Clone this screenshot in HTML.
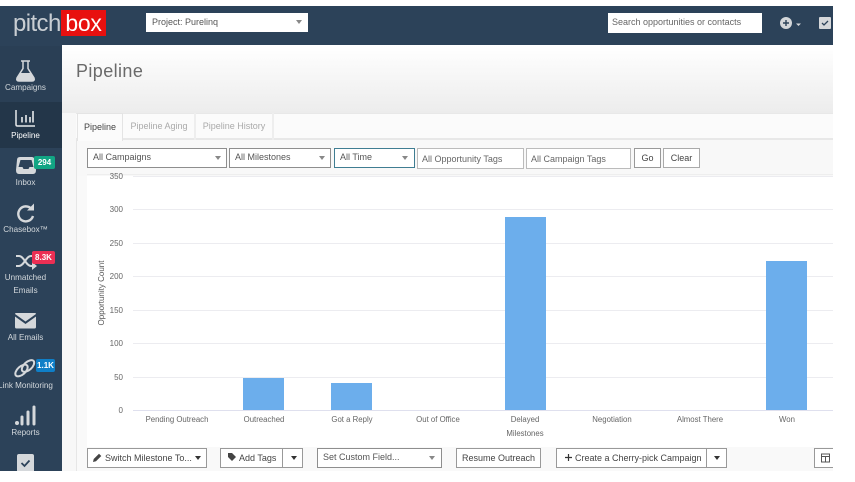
<!DOCTYPE html>
<html><head><meta charset="utf-8">
<style>
html,body{margin:0;padding:0;background:#fff}
#p{position:relative;width:855px;height:482px;overflow:hidden;background:#fff;font-family:"Liberation Sans",sans-serif;color:#444;filter:blur(.3px)}
#p div{position:absolute;box-sizing:border-box;white-space:nowrap}
.nl{left:-10px;width:71px;text-align:center;font-size:8.1px;color:#d3d8dc;line-height:10px;margin-top:1px}
.bd{color:#fff;font-size:8px;font-weight:bold;text-align:center;border-radius:2px;height:13px;line-height:13px}
.sel{background:#fff;border:1px solid #8e8e8e;height:20px;top:148px;font-size:9px;line-height:17px;padding-left:5px;color:#555}
.tri{width:0;height:0;border-left:3px solid transparent;border-right:3px solid transparent;border-top:4px solid #888}
.inp{background:#fff;border:1px solid #bbb;height:21px;top:148px;font-size:9px;line-height:20px;padding-left:4px;color:#666}
.btn{background:#fff;border:1px solid #999;height:20px;font-size:9px;line-height:18px;text-align:center;color:#444}
.yl{left:100px;width:23px;text-align:right;font-size:8px;line-height:10px;color:#666}
.gl{left:133px;width:700px;height:1px;background:#ececf0}
.xl{width:100px;text-align:center;font-size:7.8px;line-height:10px;color:#666;top:415px}
.bar{background:#6caeec;width:41px}
.tab{top:113px;height:27px;font-size:9px;line-height:26px;text-align:center;color:#aaa;border-right:2px solid #eee}
svg{position:absolute;overflow:visible}
</style></head><body><div id="p">
<div style="left:0;top:6px;width:833px;height:39px;background:#2c4259"></div>
<div style="left:0;top:45px;width:62px;height:426px;background:#2c4259"></div>
<div style="left:0;top:46px;width:62px;height:56px;background:#2a3f55"></div>
<div style="left:0;top:102px;width:62px;height:46px;background:#233649"></div>
<div style="left:62px;top:45px;width:771px;height:426px;background:#f7f7f7"></div>
<div style="left:62px;top:45px;width:771px;height:68px;background:linear-gradient(#fff,#ececec)"></div>
<div style="left:13px;top:7px;font-size:24px;color:#c9ced3;line-height:34px;letter-spacing:-.6px">pitch</div>
<div style="left:61px;top:10px;width:45px;height:26px;background:#e8100f;color:#fff;font-size:23px;line-height:27px;text-align:center;letter-spacing:-.3px">box</div>
<div style="left:146px;top:13px;width:162px;height:19px;background:#fff;font-size:9px;line-height:19px;padding-left:6px;color:#555">Project: Purelinq</div>
<div class="tri" style="left:296px;top:20px"></div>
<div style="left:608px;top:13px;width:154px;height:20px;background:#fff;font-size:9px;line-height:19px;padding-left:4px;color:#666">Search opportunities or contacts</div>
<svg style="left:780px;top:17px" width="14" height="14"><circle cx="6" cy="6" r="6" fill="#d3d6d9"/><path d="M6 3v6M3 6h6" stroke="#2c4259" stroke-width="1.4"/><path d="M16 6.500h5l-2.500 2.500z" fill="#d3d6d9"/></svg>
<div style="left:819px;top:17px;width:12px;height:12px;background:#d5d7da;border-radius:1px"></div>
<svg style="left:819px;top:17px" width="12" height="12"><path d="M3 6l2 2 4-4" stroke="#2c4259" stroke-width="1.300" fill="none"/></svg>
<div style="left:76px;top:58px;font-size:18px;line-height:26px;color:#6a6a6a;letter-spacing:.4px">Pipeline</div>
<div style="left:76px;top:113px;width:757px;height:358px;background:#f9f9f9;border-left:1px solid #e6e6e6"></div>
<div style="left:87px;top:176px;width:746px;height:271px;background:#fff"></div>
<div style="left:76px;top:113px;width:757px;height:27px;background:#fbfbfb;border-top:1px solid #e8e8e8;border-bottom:2px solid #e8e8e8"></div>
<div style="left:77px;top:140px;width:756px;height:36px;background:#f8f8f8"></div>
<div style="left:87px;top:174px;width:746px;height:1px;background:#eeeeee"></div>
<div class="tab" style="left:77px;width:46px;background:#fbfbfb;color:#444;height:28px;border-right:1px solid #e4e4e4;border-left:1px solid #e4e4e4;border-top:1px solid #e4e4e4">Pipeline</div>
<div class="tab" style="left:124px;width:72px">Pipeline Aging</div>
<div class="tab" style="left:196px;width:78px">Pipeline History</div>
<div class="sel" style="left:87px;width:140px">All Campaigns</div><div class="tri" style="left:215px;top:156px"></div>
<div class="sel" style="left:229px;width:102px">All Milestones</div><div class="tri" style="left:319px;top:156px"></div>
<div class="sel" style="left:334px;width:81px;border:1px solid #3f7d92">All Time</div><div class="tri" style="left:402px;top:156px"></div>
<div class="inp" style="left:417px;width:107px">All Opportunity Tags</div>
<div class="inp" style="left:526px;width:105px">All Campaign Tags</div>
<div class="btn" style="left:634px;top:148px;width:27px">Go</div>
<div class="btn" style="left:663px;top:148px;width:37px;border-color:#aaa">Clear</div>
<div class="gl" style="top:176px"></div><div class="gl" style="top:209px"></div><div class="gl" style="top:243px"></div><div class="gl" style="top:276px"></div><div class="gl" style="top:310px"></div><div class="gl" style="top:343px"></div><div class="gl" style="top:377px"></div><div class="gl" style="top:410px;background:#dfe0ee"></div>
<div class="yl" style="top:172px">350</div><div class="yl" style="top:205px">300</div><div class="yl" style="top:239px">250</div><div class="yl" style="top:272px">200</div><div class="yl" style="top:306px">150</div><div class="yl" style="top:339px">100</div><div class="yl" style="top:373px">50</div><div class="yl" style="top:406px">0</div>
<div style="left:52px;top:288px;width:100px;text-align:center;font-size:8px;line-height:10px;color:#555;transform:rotate(-90deg)">Opportunity Count</div>
<div class="bar" style="left:243px;top:378px;height:32px"></div>
<div class="bar" style="left:331px;top:383px;height:27px"></div>
<div class="bar" style="left:504.500px;top:217px;height:193px"></div>
<div class="bar" style="left:766px;top:261px;height:149px"></div>
<div class="xl" style="left:127px">Pending Outreach</div>
<div class="xl" style="left:214px">Outreached</div>
<div class="xl" style="left:302px">Got a Reply</div>
<div class="xl" style="left:388px">Out of Office</div>
<div class="xl" style="left:475px">Delayed</div>
<div class="xl" style="left:562px">Negotiation</div>
<div class="xl" style="left:650px">Almost There</div>
<div class="xl" style="left:737px">Won</div>
<div class="xl" style="left:475px;top:429px">Milestones</div>
<div class="btn" style="left:87px;top:448px;width:120px;text-align:left;padding-left:17px">Switch Milestone To...</div>
<svg style="left:92px;top:452px" width="11" height="11"><path d="M1 10l.7-3L7 1.700l2.300 2.300L4 9.300z" fill="#444"/></svg>
<div class="tri" style="left:195px;top:456px;border-top-color:#333"></div>
<div class="btn" style="left:220px;top:448px;width:63px;text-align:left;padding-left:18px">Add Tags</div>
<svg style="left:227px;top:452px" width="10" height="10"><path d="M1 1h4l4 4-4 4-4-4z" fill="#444"/></svg>
<div class="btn" style="left:282px;top:448px;width:21px"></div>
<div class="tri" style="left:291px;top:456px;border-top-color:#333"></div>
<div class="sel" style="left:317px;top:448px;width:125px">Set Custom Field...</div><div class="tri" style="left:429px;top:456px"></div>
<div class="btn" style="left:456px;top:448px;width:85px">Resume Outreach</div>
<div class="btn" style="left:556px;top:448px;width:151px;text-align:left;padding-left:18px">Create a Cherry-pick Campaign</div>
<svg style="left:564px;top:453px" width="9" height="9"><path d="M4.500 1v7M1 4.500h7" stroke="#333" stroke-width="1.200"/></svg>
<div class="btn" style="left:706px;top:448px;width:21px"></div>
<div class="tri" style="left:714px;top:456px;border-top-color:#333"></div>
<div class="btn" style="left:814px;top:448px;width:19px;border-right:0"></div>
<svg style="left:821px;top:453px" width="10" height="10"><path d="M.5 1h8v8h-8zM.5 3.500h8M4.500 3.500v5.500" stroke="#555" fill="none"/></svg>

<svg style="left:15px;top:60px" width="22" height="22"><path d="M6 1h9M8 1.500v7L2 18q-1 3 2 3h13q3 0 2-3l-6-9.500v-7" stroke="#d5d8db" stroke-width="1.500" fill="none"/><path d="M5.500 13h10l3.500 6q.5 2-2 2H4q-2.500 0-2-2z" fill="#d5d8db"/></svg>
<div class="nl" style="top:82px">Campaigns</div>
<svg style="left:15px;top:110px" width="22" height="18"><path d="M1 0v14.500q0 1.500 1.500 1.500H20" stroke="#e8eaec" stroke-width="1.500" fill="none"/><path d="M7 7v5.500M11 5v7.500M15 7v5.500M18 1v11.500" stroke="#e8eaec" stroke-width="1.600"/></svg>
<div class="nl" style="top:130px;color:#fff">Pipeline</div>
<svg style="left:16px;top:157px" width="20" height="17"><path d="M4 0h12q2 0 3 3l1 10q0 4-3 4H3q-3 0-3-4L1 3q0-3 3-3z" fill="#d5d8db"/><path d="M4.500 3h11l2 7h-4l-1 2H7.500l-1-2H2.500z" fill="#2c4259"/></svg>
<div class="bd" style="left:34px;top:156px;width:21px;background:#12a584">294</div>
<div class="nl" style="top:177px">Inbox</div>
<svg style="left:15px;top:203px" width="22" height="20"><path d="M16.500 6A7.500 7.500 0 1 0 18 13" stroke="#d5d8db" stroke-width="2.400" fill="none"/><path d="M12 7.500h7v-7z" fill="#d5d8db"/></svg>
<div class="nl" style="top:224px">Chasebox™</div>
<svg style="left:15px;top:252px" width="22" height="18"><path d="M1 4h3c5 0 7 10 12 10h2M1 14h3c5 0 7-10 12-10h2" stroke="#d5d8db" stroke-width="2" fill="none"/><path d="M17 0l5 4-5 4zM17 10l5 4-5 4z" fill="#d5d8db"/></svg>
<div class="bd" style="left:32px;top:251px;width:23px;background:#ec2f54">8.3K</div>
<div class="nl" style="top:272px">Unmatched</div>
<div class="nl" style="top:285px">Emails</div>
<svg style="left:15px;top:313px" width="22" height="16"><path d="M1 0h19q1 0 1 1L10.500 8.500 0 1q0-1 1-1zM0 3.500l10.500 7.500L21 3.500V14q0 1.500-1.500 1.500h-18Q0 15.500 0 14z" fill="#d5d8db"/></svg>
<div class="nl" style="top:332px">All Emails</div>
<svg style="left:14px;top:360px" width="23" height="17"><ellipse cx="7.500" cy="10.500" rx="7.500" ry="4" transform="rotate(-42 7.500 10.500)" stroke="#d5d8db" stroke-width="2" fill="none"/><ellipse cx="14" cy="6" rx="7.500" ry="4" transform="rotate(-42 14 6)" stroke="#d5d8db" stroke-width="2" fill="none"/></svg>
<div class="bd" style="left:36px;top:359px;width:19px;background:#0f7fc8">1.1K</div>
<div class="nl" style="top:380px">Link Monitoring</div>
<svg style="left:15px;top:405px" width="22" height="21"><circle cx="2" cy="18" r="2" fill="#d5d8db"/><path d="M7 12v7M13 7v12M19 2v17" stroke="#d5d8db" stroke-width="3" stroke-linecap="round"/></svg>
<div class="nl" style="top:427px">Reports</div>
<div style="left:17px;top:454px;width:17px;height:17px;background:#d5d8db;border-radius:2px 2px 0 0"></div>
<svg style="left:17px;top:454px" width="17" height="17"><path d="M4.500 9l3 3 5-5.500" stroke="#2c4259" stroke-width="1.800" fill="none"/></svg>
</div></body></html>
